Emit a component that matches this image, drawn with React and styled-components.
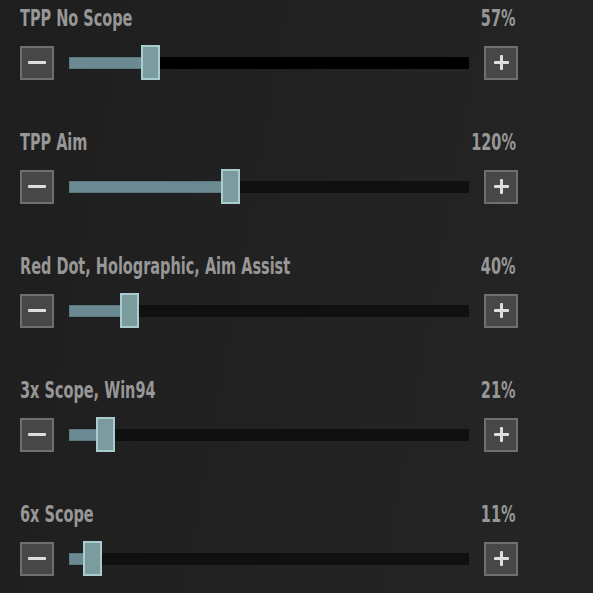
import styled, { createGlobalStyle } from "styled-components";

const settings = [
    { label: "TPP No Scope", value: 57, deep: true },
    { label: "TPP Aim", value: 120 },
    { label: "Red Dot, Holographic, Aim Assist", value: 40 },
    { label: "3x Scope, Win94", value: 21 },
    { label: "6x Scope", value: 11 },
];

const MAX = 300;
const TRACK = 400;
const THUMB = 19;

export default function App(){
    return(
        <>
            <GlobalStyle />
            <Panel>
                {settings.map((item) => (
                    <Setting key={item.label}>
                        <Header>
                            <Text>{item.label}</Text>
                            <Text right>{item.value}%</Text>
                        </Header>
                        <Controls>
                            <StepButton aria-label="decrease">
                                <Bar />
                            </StepButton>
                            <Track deep={item.deep}>
                                <Fill style={{ width: (item.value / MAX) * (TRACK - THUMB) + 4 }} />
                                <Thumb style={{ left: (item.value / MAX) * (TRACK - THUMB) }} />
                            </Track>
                            <StepButton aria-label="increase">
                                <Bar small />
                                <Bar small vertical />
                            </StepButton>
                        </Controls>
                    </Setting>
                ))}
            </Panel>
        </>
    );
}

const GlobalStyle = createGlobalStyle`
    html, body{
        margin: 0;
        background: #222;
    }
`

const Panel = styled.div`
    width: 593px;
    height: 593px;
    box-sizing: border-box;
    overflow: hidden;
    padding: 4px 75px 0 20px;
    display: flex;
    flex-direction: column;
    gap: 48px;
    background: linear-gradient(100deg, #1e1e1e 0%, #222 50%, #252525 100%);
    font-family: "DejaVu Sans Condensed", "Liberation Sans", sans-serif;
    font-weight: 700;
    color: #979797;
`

const Setting = styled.div`
    display: flex;
    flex-direction: column;
    gap: 12px;
`

const Header = styled.div`
    display: flex;
    justify-content: space-between;
    padding-right: 2px;
    font-size: 23px;
    line-height: 29px;
`

// the game font is much narrower than anything installed, so squeeze it
const Text = styled.span`
    display: inline-block;
    white-space: nowrap;
    transform: scaleX(0.7);
    transform-origin: ${props => props.right ? 'right' : 'left'} center;
`

const Controls = styled.div`
    display: flex;
    align-items: center;
    gap: 15px;
    height: 35px;
`

const StepButton = styled.div`
    position: relative;
    width: 34px;
    height: 34px;
    box-sizing: border-box;
    border: 2px solid #6f6f6f;
    background: #474747;
    display: flex;
    align-items: center;
    justify-content: center;
    flex-shrink: 0;
`

const Bar = styled.span`
    position: absolute;
    background: #dedede;
    width: ${props => props.vertical ? '3px' : props.small ? '15px' : '18px'};
    height: ${props => props.vertical ? '15px' : '3px'};
    border-radius: 1px;
`

const Track = styled.div`
    position: relative;
    width: ${TRACK}px;
    height: 12px;
    background: ${props => props.deep ? '#000' : '#101010'};
`

const Fill = styled.div`
    height: 100%;
    background: #6b8a92;
    box-shadow: inset 0 0 0 1px #5c7980;
`

const Thumb = styled.div`
    position: absolute;
    top: -12px;
    width: ${THUMB}px;
    height: 35px;
    box-sizing: border-box;
    border: 2px solid #a8cdcf;
    background: #7b9b9e;
`
